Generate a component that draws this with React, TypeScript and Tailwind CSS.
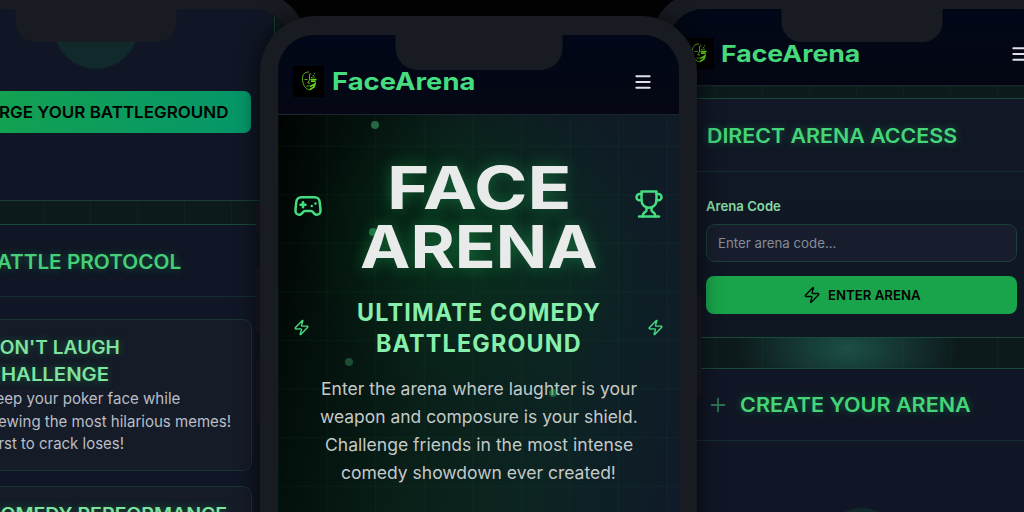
import { useLayoutEffect, useRef, useState } from 'react';
import type { ReactNode } from 'react';
import { Gamepad2, Menu, Plus, Zap } from 'lucide-react';

type FitProps = { width: number; className?: string; children: ReactNode };

// Single line of text stretched horizontally to an exact width
function Fit({ width, className = '', children }: FitProps) {
  const ref = useRef<HTMLSpanElement>(null);
  const [scale, setScale] = useState(1);

  useLayoutEffect(() => {
    if (ref.current) setScale(width / ref.current.offsetWidth);
  }, [width]);

  return (
    <div className={`shrink-0 whitespace-nowrap ${className}`} style={{ width }}>
      <span ref={ref} className="inline-block origin-left align-top" style={{ transform: `scaleX(${scale})` }}>
        {children}
      </span>
    </div>
  );
}

function Trophy() {
  return (
    <svg viewBox="0 0 24 24" className="w-[30px] h-[30px]" fill="none" stroke="currentColor" strokeWidth="2" strokeLinecap="round" strokeLinejoin="round">
      <path d="M6 9H4.5a2.5 2.5 0 0 1 0-5H6" />
      <path d="M18 9h1.5a2.5 2.5 0 0 0 0-5H18" />
      <path d="M4 22h16" />
      <path d="M10 14.66V17c0 .55-.47.98-.97 1.21C7.85 18.75 7 20.24 7 22" />
      <path d="M14 14.66V17c0 .55.47.98.97 1.21C16.15 18.75 17 20.24 17 22" />
      <path d="M18 2H6v7a6 6 0 0 0 12 0V2Z" />
    </svg>
  );
}

function Logo() {
  return (
    <div className="w-[31px] h-[31px] shrink-0 bg-black">
      <svg viewBox="0 0 31 31" className="w-full h-full" fill="none" stroke="#5fae1c" strokeWidth="1">
        <path d="M16 6C11.500 6 9.500 8.500 9.500 12.500c0 5 1.500 9 6.500 11.500 4-1.500 6-4.500 6.500-8" />
        <path d="M16.500 8v6l-1.800 3h2.500M11.500 13.500h3M13.500 20h3" />
        <path d="M17.500 13.500h6M18 15.300h4.500M17 20.500l5-2.500-1 3-4 2.500" stroke="#63d816" strokeWidth="1.500" />
        <path d="M17 7.500l2 1M19.500 10l2-1M18 11.500l4-.5M21 7.500l1 .7" strokeDasharray="1.500 .8" />
      </svg>
    </div>
  );
}

type PhoneProps = { className: string; notch: string; children: ReactNode };

function Phone({ className, notch, children }: PhoneProps) {
  return (
    <div className={`absolute border-[#181b22] ${className}`}>
      <div className="relative h-full overflow-hidden rounded-t-[36px] bg-[#0b1519]">
        {children}
        <div className={`absolute top-0 left-1/2 -translate-x-1/2 bg-[#181b22] ${notch}`} />
      </div>
    </div>
  );
}

// Faint grid drawn behind the page sections
const grid =
  'bg-[linear-gradient(to_right,#22c55e0d_1px,transparent_1px),linear-gradient(to_bottom,#22c55e0d_1px,transparent_1px)]';

function LeftScreen() {
  return (
    <Phone className="-left-[116px] -top-[9px] w-[423px] h-[560px] border-[18px] rounded-[54px]" notch="w-[161px] h-[33px] rounded-b-[20px]">
      <div className={`h-full px-[14px] bg-[#0d1a1c] bg-size-[47px_47px] ${grid}`}>
        <section className="flow-root h-[192px] px-[23px] border-x border-b border-[#174033] bg-[#101625]">
          <div className="w-[84px] h-[84px] -mt-[24px] mx-auto rounded-full bg-[#12292c]" />
          <div className="mt-[22px] h-[42px] pl-[36px] flex items-center rounded-[7px] bg-linear-to-r from-[#16a34a] to-[#059669] text-black">
            <Fit width={252} className="text-[16.500px] leading-[40px] font-semibold">FORGE YOUR BATTLEGROUND</Fit>
          </div>
        </section>

        <section className="mt-[23px] h-[400px] border border-[#174a39] bg-[#101625]">
          <div className="h-[72px] pl-[66px] pt-[2px] flex items-center border-b border-[#152f30]">
            <Fit width={198} className="text-[19.500px] leading-[28px] font-semibold text-[#45cf78] [text-shadow:0_0_8px_#22c55e66]">BATTLE PROTOCOL</Fit>
          </div>
          <div className="px-[22px] pt-[22px] flex flex-col gap-[15px]">
            <div className="h-[152px] pl-[46px] pt-[15px] rounded-[9px] border border-[#173432] bg-[#151b27]">
              <Fit width={134} className="text-[18px] leading-[26.500px] font-semibold text-[#7ee2a0] [text-shadow:0_0_8px_#22c55e66]">DON'T LAUGH</Fit>
              <Fit width={123} className="text-[18px] leading-[26.500px] font-semibold text-[#7ee2a0] [text-shadow:0_0_8px_#22c55e66]">CHALLENGE</Fit>
              <div className="text-[15.400px] leading-[22.500px] text-[#b9bec7]">
                <Fit width={194}>Keep your poker face while</Fit>
                <Fit width={245}>viewing the most hilarious memes!</Fit>
                <Fit width={138}>First to crack loses!</Fit>
              </div>
            </div>
            <div className="h-[152px] pl-[46px] pt-[15px] rounded-[9px] border border-[#173432] bg-[#151b27]">
              <Fit width={241} className="text-[18px] leading-[26.500px] font-semibold text-[#7ee2a0] [text-shadow:0_0_8px_#22c55e66]">COMEDY PERFORMANCE</Fit>
            </div>
          </div>
        </section>
      </div>
    </Phone>
  );
}

function RightScreen() {
  return (
    <Phone className="left-[650px] -top-[9px] w-[423px] h-[560px] border-[18px] rounded-[54px]" notch="w-[161px] h-[33px] rounded-b-[20px]">
      <header className="h-[77px] pt-[13px] pl-[15px] pr-[25px] flex items-center border-b border-[#1c2530] bg-linear-to-b from-[#020718] to-[#040713]">
        <Logo />
        <Fit width={139} className="ml-[7px] text-[23px] leading-[32px] font-bold text-[#46d97c]">FaceArena</Fit>
        <Menu className="ml-auto w-[20px] h-[20px] text-[#e2dfe8]" strokeWidth={2.4} />
      </header>

      <div className={`h-full px-[14px] pt-[12px] bg-[#0d1a1c] bg-size-[47px_47px] ${grid}`}>
        <section className="h-[240px] border border-[#174a39] bg-linear-to-b from-[#111726] to-[#0f1723]">
          <div className="h-[73px] pl-[24px] pt-[2px] flex items-center border-b border-[#162e32]">
            <Fit width={250} className="text-[19.500px] leading-[28px] font-semibold text-[#45d579] [text-shadow:0_0_8px_#22c55e66]">DIRECT ARENA ACCESS</Fit>
          </div>
          <div className="px-[23px] pt-[24px]">
            <Fit width={75} className="text-[13.500px] leading-[20px] font-semibold text-[#86d9a2]">Arena Code</Fit>
            <div className="mt-[8px] h-[38px] px-[11px] flex items-center rounded-[9px] border border-[#1a4038] bg-[#171d2c]">
              <Fit width={118} className="text-[13.500px] leading-[20px] text-[#858b9a]">Enter arena code...</Fit>
            </div>
            <button className="mt-[14px] w-full h-[38px] flex items-center justify-center gap-[7px] rounded-[8px] bg-[#19a34a] text-black">
              <Zap className="w-[18px] h-[18px]" strokeWidth={1.8} />
              <Fit width={93} className="text-[13.500px] leading-[20px] font-semibold">ENTER ARENA</Fit>
            </button>
          </div>
        </section>

        {/* Glow in the gap between the two cards */}
        <div className="h-[30px] bg-[radial-gradient(ellipse_110px_60px_at_46%_35%,#1b4f47,transparent)]" />

        <section className="h-[300px] border border-[#174a39] bg-[#101625]">
          <div className="h-[72px] pl-[24px] flex items-center border-b border-[#162e32]">
            <Plus className="w-[22px] h-[22px] text-[#2b7350]" strokeWidth={2} />
            <Fit width={231} className="ml-[11px] text-[19.500px] leading-[28px] font-semibold text-[#45d579] [text-shadow:0_0_8px_#22c55e66]">CREATE YOUR ARENA</Fit>
          </div>
          <div className="mt-[67px] mx-auto w-[84px] h-[84px] rounded-full bg-[#12292c]" />
        </section>
      </div>
    </Phone>
  );
}

function CenterScreen() {
  return (
    <Phone className="left-[260px] top-[16px] w-[437px] h-[560px] border-x-[18px] border-t-[19px] rounded-[56px] shadow-[0_0_24px_#000000b3]" notch="w-[167px] h-[35px] rounded-b-[22px]">
      <header className="h-[80px] pt-[14px] pl-[15px] pr-[26px] flex items-center border-b border-[#1c2530] bg-linear-to-b from-[#010718] to-[#050713]">
        <Logo />
        <Fit width={144} className="ml-[8px] text-[24px] leading-[32px] font-bold text-[#46dc80]">FaceArena</Fit>
        <Menu className="ml-auto w-[20px] h-[20px] text-[#e2dfe8]" strokeWidth={2.4} />
      </header>

      <div className="relative h-full bg-[linear-gradient(100deg,#010302_0%,#03100b_15%,#091f18_38%,#0c2422_65%,#10192a_100%)]">
        <div className="absolute inset-0 bg-[radial-gradient(ellipse_260px_200px_at_85%_0px,#11162899,transparent)]" />
        <div className={`absolute inset-0 bg-size-[48.600px_48.600px] bg-position-[0_-18px] ${grid}`} />
        <div className="absolute inset-0 bg-[radial-gradient(ellipse_170px_150px_at_48%_130px,#063d1e80,transparent)]" />
        <span className="absolute left-[93px] top-[6px] w-[8px] h-[8px] rounded-full bg-[#246741]" />
        <span className="absolute left-[67px] top-[243px] w-[8px] h-[8px] rounded-full bg-[#1c4f31]" />
        <span className="absolute left-[91px] top-[113px] w-[8px] h-[8px] rounded-full bg-[#1b7040]" />

        <div className="relative px-[15px] flex justify-between">
          <div className="w-[31px] pt-[76px] flex flex-col text-[#46dc80]">
            <Gamepad2 className="w-[30px] h-[30px]" />
            <Zap className="mt-[98px] w-[17px] h-[17px]" />
          </div>

          <div className="w-0 pt-[44px] flex flex-col items-center">
            <Fit width={184} className="text-[59px] leading-[58.500px] font-bold text-[#e9eaea] [text-shadow:0_0_14px_#22c55e66]">FACE</Fit>
            <Fit width={238} className="text-[59px] leading-[58.500px] font-bold text-[#e9eaea] [text-shadow:0_0_14px_#22c55e66]">ARENA</Fit>
            <div className="mt-[21px] flex flex-col items-center text-[24px] leading-[31px] font-bold tracking-wider text-[#86efac]">
              <Fit width={244}>ULTIMATE COMEDY</Fit>
              <Fit width={206}>BATTLEGROUND</Fit>
            </div>
            <div className="mt-[16px] flex flex-col items-center text-[17.500px] leading-[28px] text-[#c3c9c9]">
              <Fit width={316}>Enter the arena where laughter is your</Fit>
              <Fit width={318}>weapon and composure is your shield.</Fit>
              <Fit width={308}>Challenge friends in the most intense</Fit>
              <Fit width={275}>comedy showdown ever created!</Fit>
            </div>
          </div>

          <div className="w-[31px] pt-[74px] flex flex-col items-end text-[#46dc80]">
            <Trophy />
            <Zap className="mt-[100px] w-[17px] h-[17px]" />
          </div>
        </div>
        <span className="absolute left-[271px] top-[274px] w-[8px] h-[8px] rounded-full bg-[#34a86480]" />
      </div>
    </Phone>
  );
}

export default function App() {
  return (
    <div className="relative w-[1024px] h-[512px] overflow-hidden bg-[#020302] font-['Inter',sans-serif]">
      <LeftScreen />
      <RightScreen />

      {/* Hardware buttons of the middle phone */}
      <div className="absolute left-[256px] top-[203px] w-[8px] h-[30px] rounded-l-[3px] bg-[#181b22]" />
      <div className="absolute left-[256px] top-[268px] w-[8px] h-[65px] rounded-l-[3px] bg-[#181b22]" />
      <div className="absolute left-[256px] top-[359px] w-[8px] h-[64px] rounded-l-[3px] bg-[#181b22]" />
      <div className="absolute left-[694px] top-[295px] w-[7px] h-[103px] rounded-r-[3px] bg-[#181b22]" />

      <CenterScreen />
    </div>
  );
}
